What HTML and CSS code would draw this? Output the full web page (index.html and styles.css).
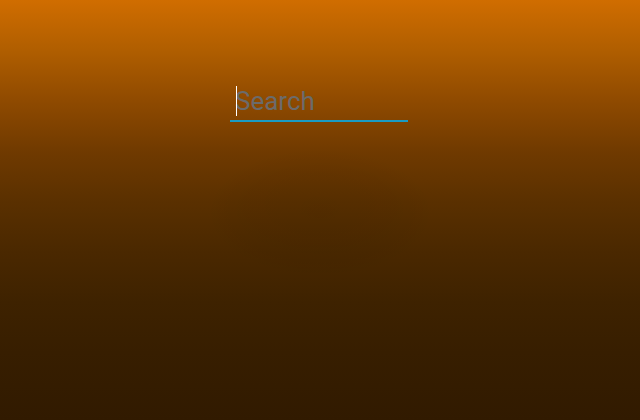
FILE: index.html
```html
<!DOCTYPE html>
<html lang="en">
<head>
<meta charset="utf-8">
<title>Search</title>
<link rel="stylesheet" href="styles.css">
</head>
<body>
<main class="stage">
  <div class="search">
    <input class="search-input" type="text" placeholder="Search">
    <span class="caret"></span>
  </div>
  <div class="glow"></div>
</main>
</body>
</html>
```

FILE: styles.css
```css
html, body {
  margin: 0;
  height: 100%;
}
body {
  font-family: Roboto, "Liberation Sans", Arial, sans-serif;
  background: linear-gradient(180deg,
    #d06d00 0%,
    #b05e00 12%,
    #8f4a00 24%,
    #703a00 36%,
    #5a3000 48%,
    #4a2800 60%,
    #3e2200 72%,
    #371e00 84%,
    #311a00 100%);
}
.stage {
  height: 100%;
  display: flex;
  flex-direction: column;
  align-items: center;
  padding-top: 84px;
  box-sizing: border-box;
}
.search {
  position: relative;
  width: 178px;
  margin-left: -2px;
}
.search-input {
  display: block;
  width: 100%;
  box-sizing: border-box;
  margin: 0;
  padding: 2px 5px 4px;
  border: 0;
  border-bottom: 2px solid #1a9bc4;
  background: transparent;
  outline: none;
  font-family: Roboto, "Liberation Sans", Arial, sans-serif;
  font-size: 26px;
  line-height: 30px;
  color: #ddd;
  caret-color: transparent;
}
.search-input::placeholder {
  color: #6b6b6b;
  opacity: 1;
}
.caret {
  position: absolute;
  left: 6px;
  top: 2px;
  width: 1px;
  height: 30px;
  background: #fff;
}
.glow {
  width: 230px;
  height: 130px;
  margin-top: 26px;
  border-radius: 50%;
  background: radial-gradient(closest-side, rgba(0,0,0,0.06), rgba(0,0,0,0.03) 70%, rgba(0,0,0,0));
}
```
